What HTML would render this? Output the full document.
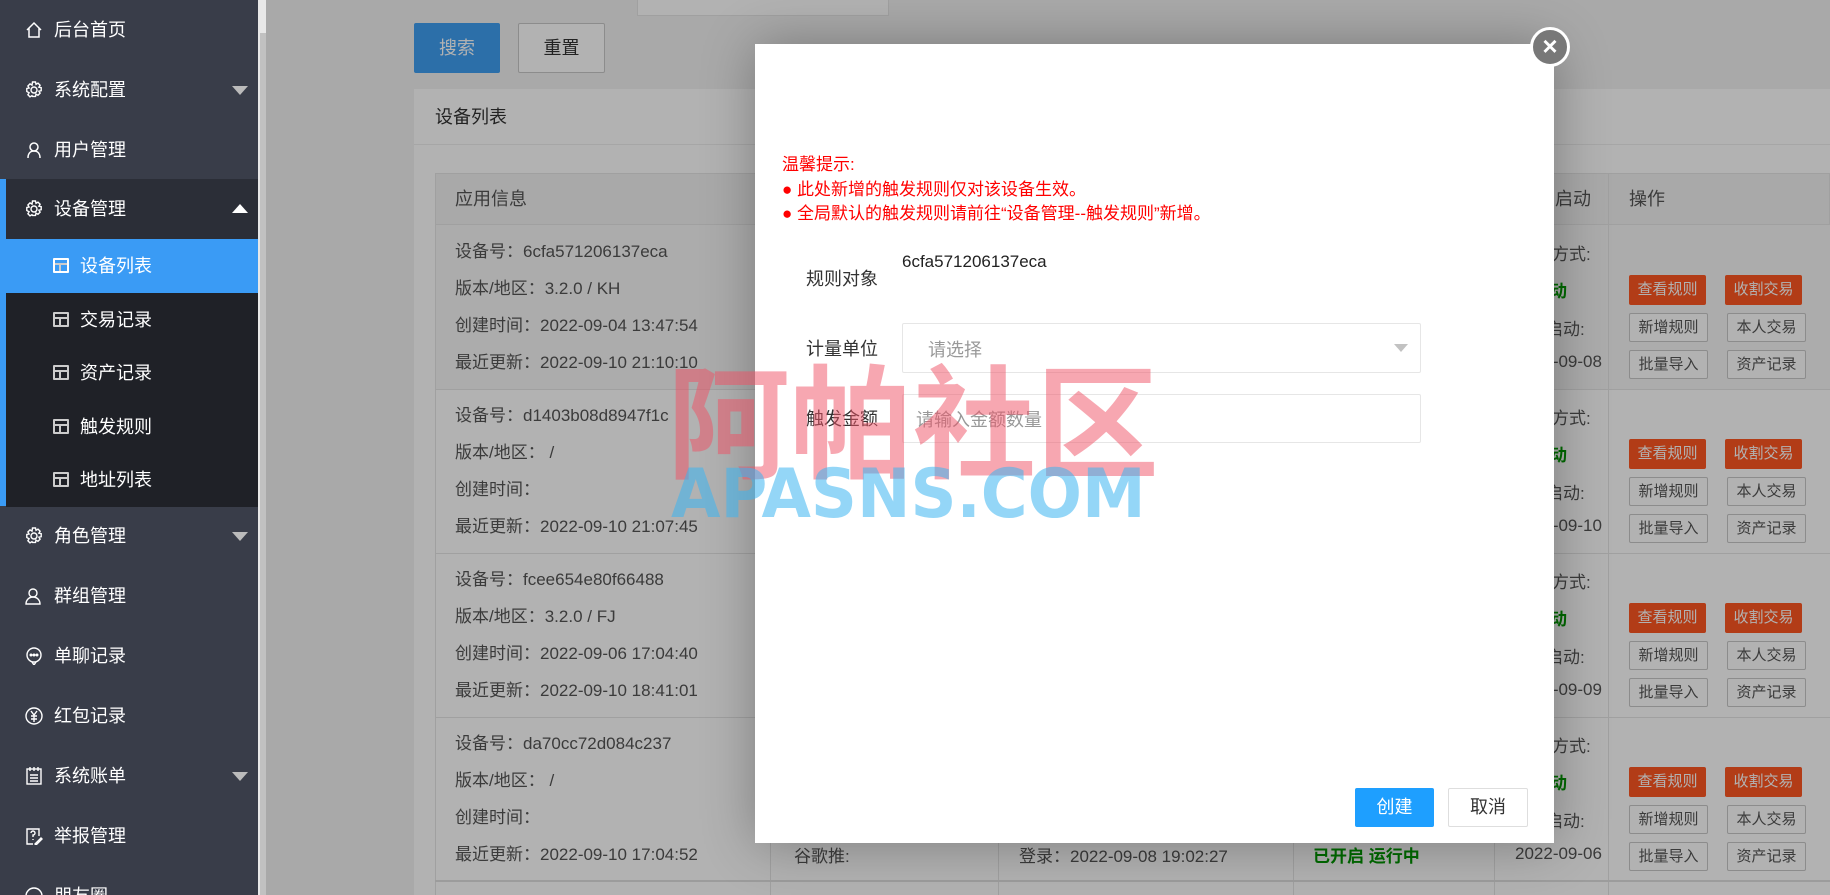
<!DOCTYPE html>
<html style="overflow:hidden;width:1830px;height:895px"><head><meta charset="utf-8">
<style>
*{margin:0;padding:0;box-sizing:border-box}
body{width:1830px;height:895px;overflow:hidden;position:relative;background:#f2f2f2;font-family:"Liberation Sans","Noto Sans CJK SC",sans-serif;color:#333}
.a{position:absolute;white-space:nowrap}
#side{position:absolute;left:0;top:0;width:258px;height:895px;background:#393d49;color:#fff;font-size:18px;overflow:hidden}
.it{position:absolute;left:0;width:258px;height:60px;line-height:60px;padding-left:54px}
.sub{position:absolute;left:0;width:258px;height:54px;line-height:54px;padding-left:80px;background:#1f2127}
.ico{position:absolute;left:25px;top:21px;width:18px;height:18px}
.sico{position:absolute;left:53px;top:19px;width:16px;height:15px;border:2px solid #ccc;border-radius:1px}
.sico:before{content:"";position:absolute;left:0;right:0;top:3px;border-top:2px solid #ccc}
.sico:after{content:"";position:absolute;left:4px;top:5px;bottom:0;border-left:2px solid #ccc}
.tri{position:absolute;right:10px;top:26px;border-left:8px solid transparent;border-right:8px solid transparent;border-top:9px solid #bbb}
.btn{position:absolute;font-size:16px;text-align:center;border-radius:2px}
.ob{background:#ff5722;color:#fff;width:77px;height:30px;line-height:30px;font-size:15px}
.wb{background:#fff;border:1px solid #c9c9c9;color:#555;width:79px;height:29px;line-height:27px;font-size:15px}
.t{font-size:17px;color:#555}
.g{font-size:17px;font-weight:bold;color:#009900}
</style></head><body>

<div class="a" style="left:266px;top:0;width:1564px;height:895px;background:#f2f2f2"></div>
<div class="a" style="left:258px;top:0;width:8px;height:895px;background:#e8e8e8"></div>
<div class="a" style="left:260px;top:33px;width:6px;height:862px;background:#c1c1c1"></div>
<div class="a" style="left:637px;top:-4px;width:252px;height:20px;background:#fff;border:1px solid #e6e6e6"></div>
<div class="btn" style="left:414px;top:23px;width:86px;height:50px;line-height:50px;background:#3f9ff3;color:#fff;font-size:18px">搜索</div>
<div class="btn" style="left:518px;top:23px;width:87px;height:50px;line-height:48px;background:#fff;border:1px solid #c9c9c9;color:#333;font-size:18px">重置</div>
<div class="a" style="left:414px;top:89px;width:1416px;height:806px;background:#fff"></div>
<div class="a" style="left:414px;top:89px;width:1416px;height:56px;border-bottom:1px solid #eee;line-height:56px;padding-left:21px;font-size:18px">设备列表</div>
<div class="a" style="left:435px;top:173px;width:1395px;height:52px;background:#f2f2f2;border:1px solid #e6e6e6"></div>
<div class="a t" style="left:455px;top:173px;line-height:52px;font-size:18px">应用信息</div>
<div class="a t" style="left:1537px;top:173px;line-height:52px;font-size:18px">自启动</div>
<div class="a t" style="left:1629px;top:173px;line-height:52px;font-size:18px">操作</div>
<div class="a" style="left:435px;top:225px;width:1395px;height:164px;background:#f6f6f6"></div>
<div class="a" style="left:435px;top:173px;width:1px;height:722px;background:#e6e6e6"></div>
<div class="a" style="left:770px;top:173px;width:1px;height:722px;background:#e6e6e6"></div>
<div class="a" style="left:998px;top:173px;width:1px;height:722px;background:#e6e6e6"></div>
<div class="a" style="left:1293px;top:173px;width:1px;height:722px;background:#e6e6e6"></div>
<div class="a" style="left:1494px;top:173px;width:1px;height:722px;background:#e6e6e6"></div>
<div class="a" style="left:1608px;top:173px;width:1px;height:722px;background:#e6e6e6"></div>
<div class="a" style="left:435px;top:389px;width:1395px;height:1px;background:#e6e6e6"></div>
<div class="a" style="left:435px;top:553px;width:1395px;height:1px;background:#e6e6e6"></div>
<div class="a" style="left:435px;top:717px;width:1395px;height:1px;background:#e6e6e6"></div>
<div class="a" style="left:435px;top:880px;width:1395px;height:2px;background:#e0e0e0"></div>

<div class="a t" style="left:455px;top:240px;line-height:24px">设备号：6cfa571206137eca<br><span style="display:block;margin-top:13px">版本/地区：3.2.0 / KH</span><span style="display:block;margin-top:13px">创建时间：2022-09-04 13:47:54</span><span style="display:block;margin-top:13px">最近更新：2022-09-10 21:10:10</span></div>
<div class="a t" style="left:455px;top:404px;line-height:24px">设备号：d1403b08d8947f1c<br><span style="display:block;margin-top:13px">版本/地区： /</span><span style="display:block;margin-top:13px">创建时间：</span><span style="display:block;margin-top:13px">最近更新：2022-09-10 21:07:45</span></div>
<div class="a t" style="left:455px;top:568px;line-height:24px">设备号：fcee654e80f66488<br><span style="display:block;margin-top:13px">版本/地区：3.2.0 / FJ</span><span style="display:block;margin-top:13px">创建时间：2022-09-06 17:04:40</span><span style="display:block;margin-top:13px">最近更新：2022-09-10 18:41:01</span></div>
<div class="a t" style="left:455px;top:732px;line-height:24px">设备号：da70cc72d084c237<br><span style="display:block;margin-top:13px">版本/地区： /</span><span style="display:block;margin-top:13px">创建时间：</span><span style="display:block;margin-top:13px">最近更新：2022-09-10 17:04:52</span></div>
<div class="a t" style="left:794px;top:842px">谷歌推:</div>
<div class="a t" style="left:1019px;top:842px">登录：2022-09-08 19:02:27</div>
<div class="a g" style="left:1313px;top:842px">已开启 运行中</div>

<div class="a" style="left:1495px;top:225px;width:113px;height:655px;overflow:hidden">
 <div class="a t" style="left:23px;top:15px">启动方式:</div>
 <div class="a g" style="left:38px;top:52px">自动</div>
 <div class="a t" style="left:34px;top:90px">自启动:</div>
 <div class="a t" style="left:20px;top:127px">2022-09-08</div>
 <div class="a t" style="left:23px;top:179px">启动方式:</div>
 <div class="a g" style="left:38px;top:216px">自动</div>
 <div class="a t" style="left:34px;top:254px">自启动:</div>
 <div class="a t" style="left:20px;top:291px">2022-09-10</div>
 <div class="a t" style="left:23px;top:343px">启动方式:</div>
 <div class="a g" style="left:38px;top:380px">自动</div>
 <div class="a t" style="left:34px;top:418px">自启动:</div>
 <div class="a t" style="left:20px;top:455px">2022-09-09</div>
 <div class="a t" style="left:23px;top:507px">启动方式:</div>
 <div class="a g" style="left:38px;top:544px">自动</div>
 <div class="a t" style="left:34px;top:582px">自启动:</div>
 <div class="a t" style="left:20px;top:619px">2022-09-06</div>
</div>

<div class="btn ob" style="left:1629px;top:275px">查看规则</div><div class="btn ob" style="left:1725px;top:275px">收割交易</div>
<div class="btn wb" style="left:1629px;top:313px">新增规则</div><div class="btn wb" style="left:1727px;top:313px">本人交易</div>
<div class="btn wb" style="left:1629px;top:350px">批量导入</div><div class="btn wb" style="left:1727px;top:350px">资产记录</div>
<div class="btn ob" style="left:1629px;top:439px">查看规则</div><div class="btn ob" style="left:1725px;top:439px">收割交易</div>
<div class="btn wb" style="left:1629px;top:477px">新增规则</div><div class="btn wb" style="left:1727px;top:477px">本人交易</div>
<div class="btn wb" style="left:1629px;top:514px">批量导入</div><div class="btn wb" style="left:1727px;top:514px">资产记录</div>
<div class="btn ob" style="left:1629px;top:603px">查看规则</div><div class="btn ob" style="left:1725px;top:603px">收割交易</div>
<div class="btn wb" style="left:1629px;top:641px">新增规则</div><div class="btn wb" style="left:1727px;top:641px">本人交易</div>
<div class="btn wb" style="left:1629px;top:678px">批量导入</div><div class="btn wb" style="left:1727px;top:678px">资产记录</div>
<div class="btn ob" style="left:1629px;top:767px">查看规则</div><div class="btn ob" style="left:1725px;top:767px">收割交易</div>
<div class="btn wb" style="left:1629px;top:805px">新增规则</div><div class="btn wb" style="left:1727px;top:805px">本人交易</div>
<div class="btn wb" style="left:1629px;top:842px">批量导入</div><div class="btn wb" style="left:1727px;top:842px">资产记录</div>

<div class="a" style="left:266px;top:0;width:1564px;height:895px;background:rgba(0,0,0,0.3)"></div>

<div id="side">
 <div class="it" style="top:0">
  <svg class="ico" viewBox="0 0 18 18" fill="none" stroke="#fff" stroke-width="1.5"><path d="M2 9L9 2l7 7M4 7v9h10V7"/></svg>后台首页</div>
 <div class="it" style="top:60px"><svg class="ico" viewBox="0 0 18 18" fill="none" stroke="#fff" stroke-width="1.4"><circle cx="9" cy="9" r="3"/><path d="M7.5 1h3l.5 2.3 2-1.2 2.1 2.1-1.2 2 2.3.5v3l-2.3.5 1.2 2-2.1 2.1-2-1.2-.5 2.3h-3L7 14.7l-2 1.2-2.1-2.1 1.2-2L1.8 10.5v-3L4.1 7l-1.2-2L5 2.9l2 1.2z"/></svg>系统配置<div class="tri"></div></div>
 <div class="it" style="top:120px"><svg class="ico" viewBox="0 0 18 18" fill="none" stroke="#fff" stroke-width="1.5"><circle cx="9" cy="6" r="4"/><path d="M3 17c0-4 2-7 6-7s6 3 6 7"/></svg>用户管理</div>
 <div class="a" style="left:0;top:179px;width:258px;height:327px;background:#2b2e37"></div>
 <div class="a" style="left:0;top:179px;width:6px;height:327px;background:#3a9bf5"></div>
 <div class="it" style="top:179px;left:6px;padding-left:48px;width:252px"><svg class="ico" style="left:19px" viewBox="0 0 18 18" fill="none" stroke="#fff" stroke-width="1.4"><circle cx="9" cy="9" r="3"/><path d="M7.5 1h3l.5 2.3 2-1.2 2.1 2.1-1.2 2 2.3.5v3l-2.3.5 1.2 2-2.1 2.1-2-1.2-.5 2.3h-3L7 14.7l-2 1.2-2.1-2.1 1.2-2L1.8 10.5v-3L4.1 7l-1.2-2L5 2.9l2 1.2z"/></svg>设备管理<div class="tri" style="border-top:none;border-bottom:9px solid #fff;top:25px"></div></div>
 <div class="sub" style="top:239px;background:#3a9bf5;left:0;width:258px"><div class="sico" style="border-color:#fff"></div>设备列表</div>
 <div class="sub" style="top:293px;left:6px;width:252px;padding-left:74px"><div class="sico" style="left:47px"></div>交易记录</div>
 <div class="sub" style="top:346px;left:6px;width:252px;padding-left:74px"><div class="sico" style="left:47px"></div>资产记录</div>
 <div class="sub" style="top:400px;left:6px;width:252px;padding-left:74px"><div class="sico" style="left:47px"></div>触发规则</div>
 <div class="sub" style="top:453px;left:6px;width:252px;padding-left:74px"><div class="sico" style="left:47px"></div>地址列表</div>
 <div class="it" style="top:506px"><svg class="ico" viewBox="0 0 18 18" fill="none" stroke="#fff" stroke-width="1.4"><circle cx="9" cy="9" r="3"/><path d="M7.5 1h3l.5 2.3 2-1.2 2.1 2.1-1.2 2 2.3.5v3l-2.3.5 1.2 2-2.1 2.1-2-1.2-.5 2.3h-3L7 14.7l-2 1.2-2.1-2.1 1.2-2L1.8 10.5v-3L4.1 7l-1.2-2L5 2.9l2 1.2z"/></svg>角色管理<div class="tri"></div></div>
 <div class="it" style="top:566px"><svg class="ico" viewBox="0 0 18 18" fill="none" stroke="#fff" stroke-width="1.4"><circle cx="8" cy="6" r="4"/><path d="M1 17c0-4 3-7 7-7s7 3 7 7z"/></svg>群组管理</div>
 <div class="it" style="top:626px"><svg class="ico" viewBox="0 0 18 18" fill="none" stroke="#fff" stroke-width="1.4"><circle cx="9" cy="8" r="7"/><path d="M7 15l2 3 2-3"/><circle cx="6" cy="8" r=".8" fill="#fff"/><circle cx="9" cy="8" r=".8" fill="#fff"/><circle cx="12" cy="8" r=".8" fill="#fff"/></svg>单聊记录</div>
 <div class="it" style="top:686px"><svg class="ico" viewBox="0 0 18 18" fill="none" stroke="#fff" stroke-width="1.4"><circle cx="9" cy="9" r="8"/><path d="M6 4l3 4 3-4M9 8v7M6 9h6M6 12h6"/></svg>红包记录</div>
 <div class="it" style="top:746px"><svg class="ico" viewBox="0 0 18 18" fill="none" stroke="#fff" stroke-width="1.4"><rect x="2" y="2" width="14" height="15"/><path d="M5 0v4M9 0v4M13 0v4M5 8h8M5 11h8M5 14h8"/></svg>系统账单<div class="tri"></div></div>
 <div class="it" style="top:806px"><svg class="ico" viewBox="0 0 18 18" fill="none" stroke="#fff" stroke-width="1.4"><path d="M14 9V2H2v15h6"/><path d="M6 6a2 2 0 1 1 2 2v2M8 12v1M10 17l6-6 1 1-6 6z"/></svg>举报管理</div>
 <div class="it" style="top:866px;height:29px;overflow:hidden"><svg class="ico" viewBox="0 0 18 18" fill="none" stroke="#fff" stroke-width="1.4"><circle cx="9" cy="9" r="8"/></svg>朋友圈</div>
</div>

<div class="a" style="left:755px;top:44px;width:799px;height:799px;background:#fff;box-shadow:1px 1px 50px rgba(0,0,0,.3)"></div>
<div class="a" style="left:1530px;top:27px;width:40px;height:40px;border-radius:50%;background:#787878;border:3px solid #fff;color:#fff;text-align:center;line-height:32px;font-size:26px;font-weight:bold;font-family:'Liberation Sans',sans-serif">×</div>
<div class="a" style="left:782px;top:153px;font-size:17px;line-height:24.5px;color:#f00">温馨提示:<br>● 此处新增的触发规则仅对该设备生效。<br>● 全局默认的触发规则请前往“设备管理--触发规则”新增。</div>
<div class="a" style="left:806px;top:265px;font-size:18px;color:#333">规则对象</div>
<div class="a" style="left:902px;top:252px;font-size:17px;color:#222">6cfa571206137eca</div>
<div class="a" style="left:806px;top:335px;font-size:18px;color:#333">计量单位</div>
<div class="a" style="left:902px;top:323px;width:519px;height:50px;border:1px solid #e6e6e6;border-radius:2px"></div>
<div class="a" style="left:928px;top:336px;font-size:18px;color:#999">请选择</div>
<div class="a" style="left:1394px;top:344px;border-left:7px solid transparent;border-right:7px solid transparent;border-top:8px solid #c2c2c2"></div>
<div class="a" style="left:806px;top:405px;font-size:18px;color:#333">触发金额</div>
<div class="a" style="left:902px;top:394px;width:519px;height:49px;border:1px solid #e6e6e6;border-radius:2px"></div>
<div class="a" style="left:916px;top:406px;font-size:18px;color:#999">请输入金额数量</div>
<div class="btn" style="left:1355px;top:788px;width:79px;height:39px;line-height:39px;background:#1e9fff;color:#fff;font-size:18px">创建</div>
<div class="btn" style="left:1448px;top:788px;width:80px;height:39px;line-height:37px;background:#fff;border:1px solid #dedede;color:#333;font-size:18px">取消</div>

<div class="a" style="left:667px;top:350px;font-size:123px;font-weight:bold;color:rgba(240,80,100,0.5);line-height:130px;font-family:'Noto Sans CJK SC',sans-serif">阿帕社区</div>
<div class="a" style="left:671px;top:460px;font-size:68px;font-weight:bold;color:rgba(60,180,240,0.55);line-height:70px;font-family:'DejaVu Sans',sans-serif;transform:scaleX(0.94);transform-origin:left">APASNS.COM</div>
</body></html>
